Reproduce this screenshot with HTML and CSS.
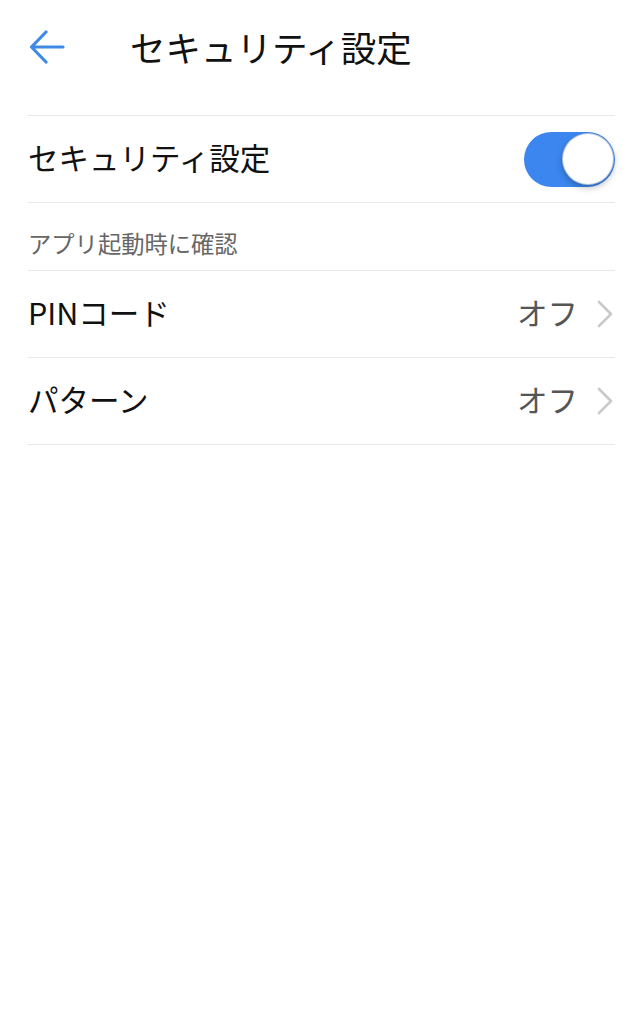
FILE: index.html
```html
<!DOCTYPE html>
<html lang="ja">
<head>
<meta charset="utf-8">
<title>セキュリティ設定</title>
<link rel="stylesheet" href="styles.css">
</head>
<body>
<header class="header">
  <svg class="back" width="36" height="34" viewBox="0 0 36 34" aria-hidden="true">
    <path d="M34 17H3M17 2L2.5 17L17 32" fill="none" stroke="#3f8ae6" stroke-width="3.2" stroke-linecap="round" stroke-linejoin="round"/>
  </svg>
  <h1 class="title">セキュリティ設定</h1>
</header>
<main class="list">
  <div class="row">
    <span class="label">セキュリティ設定</span>
    <span class="toggle"><span class="knob"></span></span>
  </div>
  <div class="section">アプリ起動時に確認</div>
  <div class="row">
    <span class="label">PINコード</span>
    <span class="value">オフ</span>
    <svg class="chev" width="16" height="28" viewBox="0 0 16 28" aria-hidden="true">
      <path d="M2 2L14 14L2 26" fill="none" stroke="#c9c9c9" stroke-width="2.6" stroke-linecap="round" stroke-linejoin="round"/>
    </svg>
  </div>
  <div class="row">
    <span class="label">パターン</span>
    <span class="value">オフ</span>
    <svg class="chev" width="16" height="28" viewBox="0 0 16 28" aria-hidden="true">
      <path d="M2 2L14 14L2 26" fill="none" stroke="#c9c9c9" stroke-width="2.6" stroke-linecap="round" stroke-linejoin="round"/>
    </svg>
  </div>
</main>
</body>
</html>
```

FILE: styles.css
```css
html, body {
  margin: 0;
  padding: 0;
  background: #ffffff;
}
body {
  font-family: "Noto Sans CJK JP", "Noto Sans", sans-serif;
  color: #111111;
}
.header {
  height: 94px;
  display: flex;
  align-items: center;
  padding-left: 29px;
}
.back {
  display: block;
  flex: none;
}
.title {
  margin: 0 0 0 65px;
  font-size: 35.5px;
  font-weight: 400;
  line-height: 1;
  letter-spacing: 0;
}
.list {
  margin: 21px 29px 0 28px;
  border-top: 1px solid #e8e8e8;
}
.row {
  height: 86px;
  display: flex;
  align-items: center;
  border-bottom: 1px solid #e8e8e8;
}
.label {
  flex: 1;
  font-size: 30.5px;
  line-height: 1;
  margin-bottom: 3px;
}
.value {
  font-size: 30.5px;
  line-height: 1;
  color: #555555;
  margin-right: 19px;
  margin-bottom: 3px;
}
.chev {
  display: block;
  margin-right: 2px;
}
.toggle {
  position: relative;
  width: 91px;
  height: 55px;
  border-radius: 28px;
  background: #3b87ef;
  margin-top: 1px;
}
.knob {
  position: absolute;
  right: 1px;
  top: 1px;
  width: 52px;
  height: 52px;
  border-radius: 50%;
  background: #ffffff;
  box-shadow: 0 3px 6px rgba(0, 0, 0, 0.25);
  border: 1px solid rgba(40, 80, 140, 0.35);
  box-sizing: border-box;
}
.section {
  height: 68px;
  display: flex;
  align-items: flex-end;
  box-sizing: border-box;
  border-bottom: 1px solid #e8e8e8;
  font-size: 23.3px;
  line-height: 1;
  color: #666666;
  padding-bottom: 15px;
}
```
